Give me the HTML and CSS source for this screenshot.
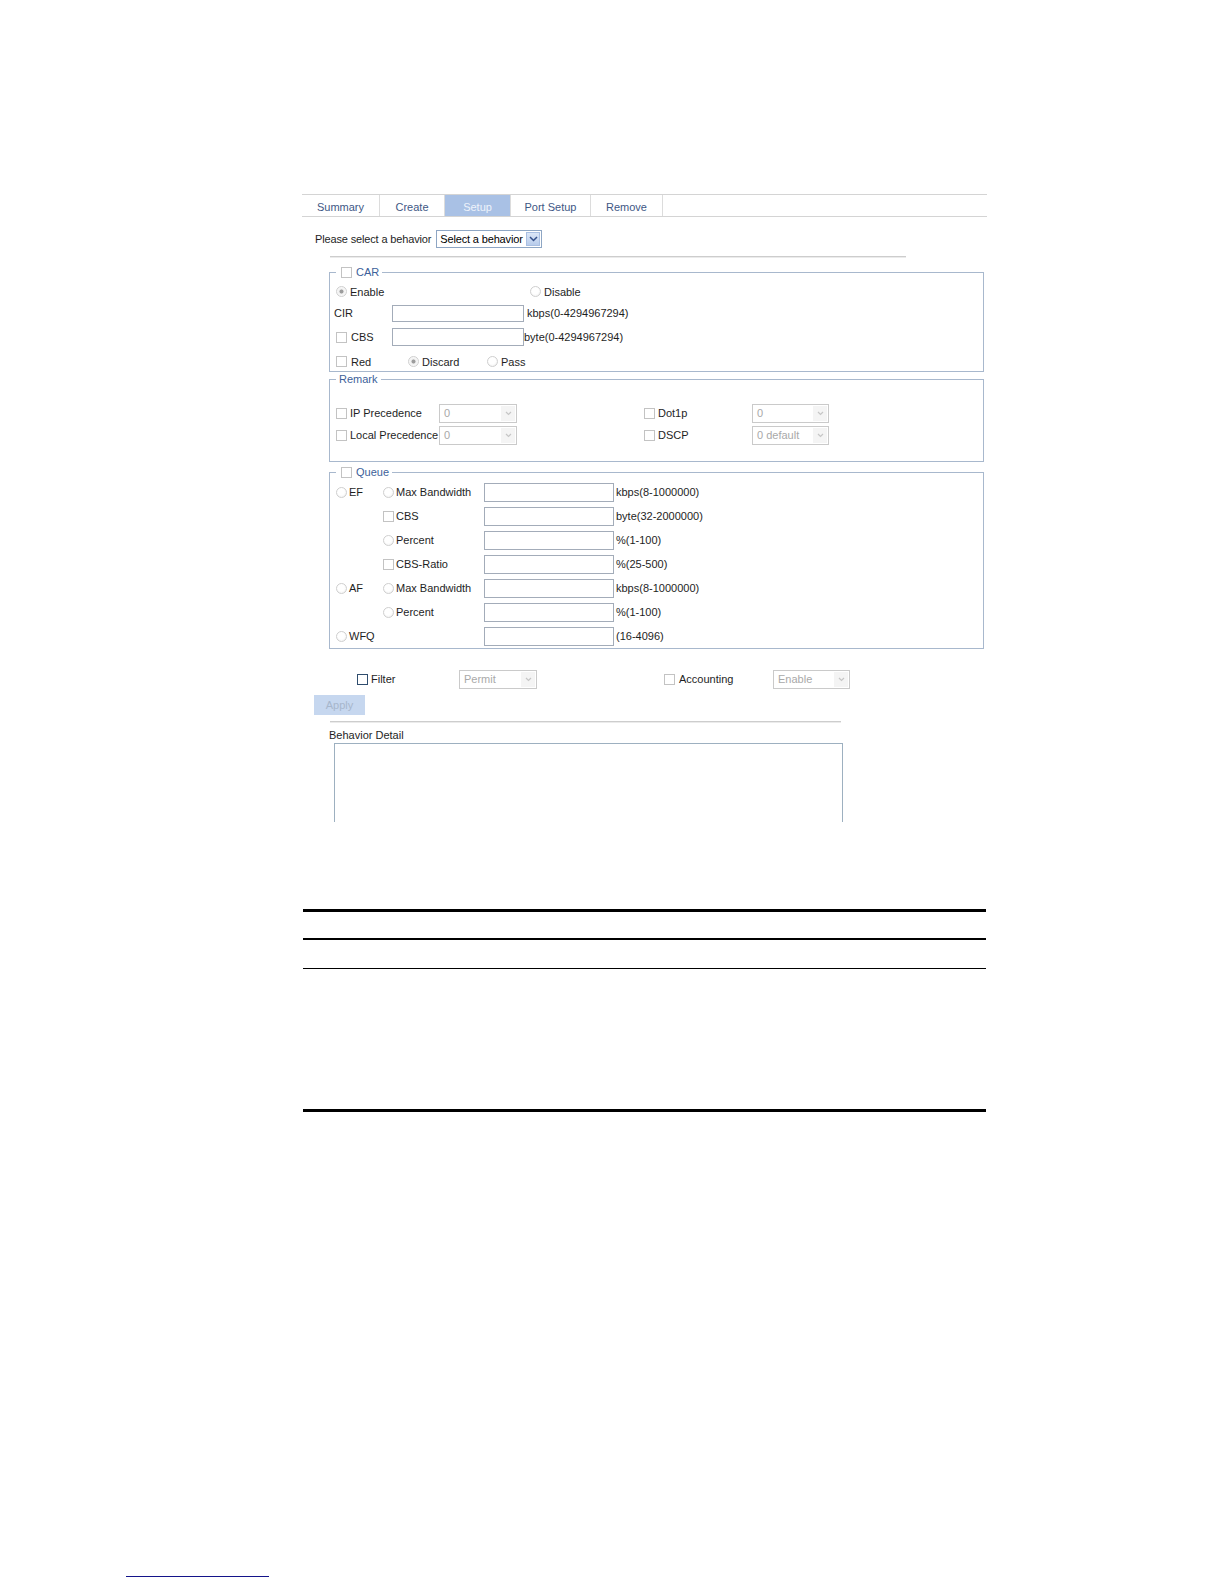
FILE: index.html
```html
<!DOCTYPE html>
<html lang="en">
<head>
<meta charset="utf-8">
<title>Behavior Setup</title>
<link rel="stylesheet" href="styles.css">
</head>
<body>
<main class="doc">
  <section class="shot">
    <nav class="tabs">
      <span class="tab tab-summary">Summary</span>
      <span class="tab tab-create">Create</span>
      <span class="tab tab-setup active">Setup</span>
      <span class="tab tab-port">Port Setup</span>
      <span class="tab tab-remove">Remove</span>
    </nav>

    <div class="select-row">
      <span class="lbl">Please select a behavior</span>
      <span class="combo">
        <span class="combo-text">Select a behavior</span>
        <span class="combo-btn"><svg width="9" height="6" viewBox="0 0 9 6"><path d="M1 1 L4.5 4.5 L8 1" fill="none" stroke="#34508a" stroke-width="1.5"/></svg></span>
      </span>
    </div>

    <div class="sep sep-top"></div>

    <fieldset class="group car">
      <legend class="legend legend-cb"><span class="cb"></span><span>CAR</span></legend>
      <div class="row car-enable">
        <span class="cell rgap w-194"><span class="rd on"></span>Enable</span>
        <span class="cell rgap"><span class="rd"></span>Disable</span>
      </div>
      <div class="row car-cir">
        <span class="cell w-58">CIR</span>
        <input class="field" type="text">
        <span class="unit">kbps(0-4294967294)</span>
      </div>
      <div class="row car-cbs">
        <span class="cell cgap w-56"><span class="cb"></span>CBS</span>
        <input class="field field-cbs" type="text">
        <span>byte(0-4294967294)</span>
      </div>
      <div class="row car-red">
        <span class="cell cgap w-72"><span class="cb"></span>Red</span>
        <span class="cell rgap w-79"><span class="rd on"></span>Discard</span>
        <span class="cell rgap"><span class="rd"></span>Pass</span>
      </div>
    </fieldset>

    <fieldset class="group remark">
      <legend class="legend legend-text">Remark</legend>
      <div class="row remark-row">
        <span class="cell rgap w-103"><span class="cb"></span>IP Precedence</span>
        <span class="dd"><span>0</span><span class="dd-btn"><svg width="7" height="5" viewBox="0 0 7 5"><path d="M1 1 L3.5 3.5 L6 1" fill="none" stroke="#c6c6c6" stroke-width="1.2"/></svg></span></span>
        <span class="cell rgap w-108 push"><span class="cb"></span>Dot1p</span>
        <span class="dd dd-77"><span>0</span><span class="dd-btn"><svg width="7" height="5" viewBox="0 0 7 5"><path d="M1 1 L3.5 3.5 L6 1" fill="none" stroke="#c6c6c6" stroke-width="1.2"/></svg></span></span>
      </div>
      <div class="row remark-row">
        <span class="cell rgap w-103"><span class="cb"></span>Local Precedence</span>
        <span class="dd"><span>0</span><span class="dd-btn"><svg width="7" height="5" viewBox="0 0 7 5"><path d="M1 1 L3.5 3.5 L6 1" fill="none" stroke="#c6c6c6" stroke-width="1.2"/></svg></span></span>
        <span class="cell rgap w-108 push"><span class="cb"></span>DSCP</span>
        <span class="dd dd-77"><span>0 default</span><span class="dd-btn"><svg width="7" height="5" viewBox="0 0 7 5"><path d="M1 1 L3.5 3.5 L6 1" fill="none" stroke="#c6c6c6" stroke-width="1.2"/></svg></span></span>
      </div>
    </fieldset>

    <fieldset class="group queue">
      <legend class="legend legend-cb"><span class="cb"></span><span>Queue</span></legend>
      <div class="row qrow">
        <span class="cell qgap w-47"><span class="rd"></span>EF</span>
        <span class="cell qgap w-101"><span class="rd"></span>Max Bandwidth</span>
        <input class="field field-q" type="text">
        <span class="unit-q">kbps(8-1000000)</span>
      </div>
      <div class="row qrow">
        <span class="cell w-47"></span>
        <span class="cell qgap w-101"><span class="cb"></span>CBS</span>
        <input class="field field-q" type="text">
        <span class="unit-q">byte(32-2000000)</span>
      </div>
      <div class="row qrow">
        <span class="cell w-47"></span>
        <span class="cell qgap w-101"><span class="rd"></span>Percent</span>
        <input class="field field-q" type="text">
        <span class="unit-q">%(1-100)</span>
      </div>
      <div class="row qrow">
        <span class="cell w-47"></span>
        <span class="cell qgap w-101"><span class="cb"></span>CBS-Ratio</span>
        <input class="field field-q" type="text">
        <span class="unit-q">%(25-500)</span>
      </div>
      <div class="row qrow">
        <span class="cell qgap w-47"><span class="rd"></span>AF</span>
        <span class="cell qgap w-101"><span class="rd"></span>Max Bandwidth</span>
        <input class="field field-q" type="text">
        <span class="unit-q">kbps(8-1000000)</span>
      </div>
      <div class="row qrow">
        <span class="cell w-47"></span>
        <span class="cell qgap w-101"><span class="rd"></span>Percent</span>
        <input class="field field-q" type="text">
        <span class="unit-q">%(1-100)</span>
      </div>
      <div class="row qrow">
        <span class="cell qgap w-148"><span class="rd"></span>WFQ</span>
        <input class="field field-q" type="text">
        <span class="unit-q">(16-4096)</span>
      </div>
    </fieldset>

    <div class="row filter-row">
      <span class="cell fgap w-102"><span class="cb cb-dark"></span>Filter</span>
      <span class="dd"><span>Permit</span><span class="dd-btn"><svg width="7" height="5" viewBox="0 0 7 5"><path d="M1 1 L3.5 3.5 L6 1" fill="none" stroke="#c6c6c6" stroke-width="1.2"/></svg></span></span>
      <span class="cell cgap w-109 push"><span class="cb"></span>Accounting</span>
      <span class="dd dd-77"><span>Enable</span><span class="dd-btn"><svg width="7" height="5" viewBox="0 0 7 5"><path d="M1 1 L3.5 3.5 L6 1" fill="none" stroke="#c6c6c6" stroke-width="1.2"/></svg></span></span>
    </div>

    <button class="apply" type="button">Apply</button>

    <div class="sep sep-bottom"></div>

    <div class="detail-label">Behavior Detail</div>
    <div class="detail-box"></div>
  </section>

  <div class="rule-table">
    <div class="rt-head"></div>
    <div class="rt-row1"></div>
    <div class="rt-row2"></div>
  </div>

  <div class="foot-rule"></div>
</main>
</body>
</html>
```

FILE: styles.css
```css
body {
  margin: 0;
  background: #ffffff;
  font-family: "Liberation Sans", Arial, sans-serif;
  font-size: 11px;
  color: #1e1e1e;
  white-space: nowrap;
}

.doc {
  display: block;
}

.shot {
  margin-left: 302px;
  width: 688px;
  padding-top: 194px;
  display: flex;
  flex-direction: column;
  align-items: flex-start;
}

/* Tabs */
.tabs {
  display: flex;
  width: 685px;
  height: 23px;
  box-sizing: border-box;
  border-top: 1px solid #d4d4d4;
  border-bottom: 1px solid #d4d4d4;
}

.tab {
  box-sizing: border-box;
  height: 21px;
  padding-top: 5px;
  line-height: 15px;
  text-align: center;
  color: #3e5785;
  border-right: 1px solid #dcdcdc;
  flex: none;
}

.tab.active {
  background: #a9c1e5;
  color: #eef3fb;
}

.tab-summary { width: 78px; }
.tab-create { width: 65px; }
.tab-setup { width: 66px; }
.tab-port { width: 80px; }
.tab-remove { width: 72px; }

/* behavior selector */
.select-row {
  margin-top: 13px;
  padding-left: 13px;
  height: 18px;
  display: flex;
  align-items: center;
  gap: 5px;
}

.lbl {
  letter-spacing: -0.15px;
}

.combo {
  box-sizing: border-box;
  width: 106px;
  height: 18px;
  border: 1px solid #8ea6c4;
  display: flex;
  align-items: center;
  justify-content: space-between;
  padding: 0 1px 0 3px;
  font-size: 11px;
  letter-spacing: -0.15px;
  color: #000;
}

.combo-btn {
  box-sizing: border-box;
  width: 14px;
  height: 14px;
  background: linear-gradient(#dbe6f7, #b8cceb);
  border: 1px solid #a9bfe2;
  display: flex;
  align-items: center;
  justify-content: center;
  flex: none;
}

.sep {
  height: 2px;
  box-sizing: border-box;
  border-top: 1px solid #cdcdcd;
  border-bottom: 1px solid #ebebeb;
}

.sep-top {
  margin-top: 8px;
  margin-left: 28px;
  width: 576px;
}

.sep-bottom {
  margin-top: 6px;
  margin-left: 28px;
  width: 511px;
}

/* Groups */
.group {
  margin: 0 0 0 27px;
  padding: 0;
  width: 655px;
  min-width: 0;
  box-sizing: border-box;
  border: 1px solid #a8b8cd;
}

.car { margin-top: 7px; }
.remark { margin-top: 0; padding-top: 16px; padding-bottom: 15px; }
.queue { margin-top: 3px; padding-top: 1px; }

.legend {
  height: 14px;
  box-sizing: border-box;
  display: flex;
  align-items: center;
  gap: 4px;
  margin-left: 6px;
  padding: 0 3px 0 5px;
  color: #3d5f9a;
}

.legend-text {
  padding-left: 3px;
}

.row {
  display: flex;
  align-items: center;
}

.cell {
  display: flex;
  align-items: center;
  flex: none;
}

.rgap { gap: 3px; }
.cgap { gap: 4px; }
.qgap { gap: 2px; }
.fgap { gap: 3px; }

.w-47 { width: 47px; }
.w-56 { width: 56px; }
.w-58 { width: 58px; }
.w-72 { width: 72px; }
.w-79 { width: 79px; }
.w-101 { width: 101px; }
.w-102 { width: 102px; }
.w-103 { width: 103px; }
.w-108 { width: 108px; }
.w-109 { width: 109px; }
.w-148 { width: 148px; }
.w-194 { width: 194px; }

.push { margin-left: 127px; }

/* CAR rows */
.car-enable { height: 25px; padding-left: 6px; }
.car-cir { height: 18px; padding-left: 4px; }
.car-cbs { height: 30px; padding-left: 6px; }
.car-red { height: 19px; padding-left: 6px; }

.unit { margin-left: 3px; }

/* Remark rows */
.remark-row { height: 22px; padding-left: 6px; }

/* Queue rows */
.qrow { height: 24px; padding-left: 6px; }
.unit-q { margin-left: 2px; }

/* controls */
.rd {
  width: 11px;
  height: 11px;
  box-sizing: border-box;
  border-radius: 50%;
  border: 1px solid #cfcfcf;
  background: radial-gradient(circle at 45% 40%, #ffffff 45%, #ececec 100%);
  flex: none;
}

.rd.on {
  background: radial-gradient(circle, #9c9c9c 0, #9c9c9c 1.6px, #f1f1f1 2.4px, #ffffff 100%);
}

.cb {
  width: 11px;
  height: 11px;
  box-sizing: border-box;
  border: 1px solid #c3c3c3;
  background: #ffffff;
  flex: none;
}

.cb-dark {
  border-color: #2f4d6e;
}

.field {
  box-sizing: border-box;
  width: 132px;
  height: 17px;
  margin: 0;
  padding: 0;
  border: 1px solid #a3acb9;
  background: #ffffff;
  font: inherit;
  flex: none;
}

.field-cbs { height: 18px; }

.field-q {
  width: 130px;
  height: 19px;
}

.dd {
  box-sizing: border-box;
  width: 78px;
  height: 19px;
  border: 1px solid #cacaca;
  display: flex;
  align-items: center;
  justify-content: space-between;
  padding: 0 1px 0 4px;
  color: #a9a9a9;
  background: #ffffff;
  flex: none;
}

.dd-77 { width: 77px; }

.dd-btn {
  width: 14px;
  height: 15px;
  background: #f4f4f4;
  display: flex;
  align-items: center;
  justify-content: center;
}

/* bottom part */
.filter-row {
  margin-top: 20px;
  height: 20px;
  padding-left: 55px;
}

.apply {
  margin-top: 6px;
  margin-left: 12px;
  width: 51px;
  height: 20px;
  box-sizing: border-box;
  border: 0;
  padding: 0;
  background: #c6d7ef;
  color: #a6b6cc;
  font: inherit;
  text-align: center;
}

.detail-label {
  margin-top: 6px;
  margin-left: 27px;
  height: 12px;
  line-height: 12px;
  color: #1e1e1e;
}

.detail-box {
  margin-top: 2px;
  margin-left: 32px;
  width: 509px;
  height: 79px;
  box-sizing: border-box;
  border: 1px solid #9db0c0;
  border-bottom: 0;
}

/* document table rules */
.rule-table {
  margin-left: 303px;
  margin-top: 87px;
  width: 683px;
  border-top: 3px solid #000;
  border-bottom: 3px solid #000;
}

.rt-head {
  height: 26px;
  border-bottom: 2px solid #000;
}

.rt-row1 {
  height: 28px;
  border-bottom: 1px solid #000;
}

.rt-row2 {
  height: 140px;
}

.foot-rule {
  margin-left: 126px;
  margin-top: 464px;
  width: 143px;
  height: 0;
  border-top: 1px solid #14148a;
}
```
